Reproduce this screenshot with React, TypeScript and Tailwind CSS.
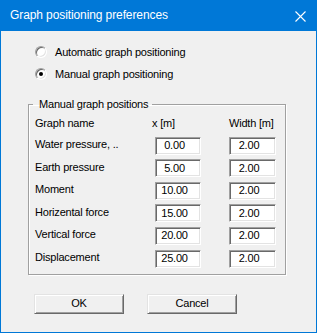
import React from 'react'

const rows = [
  { name: 'Water pressure, ..', x: '0.00', w: '2.00' },
  { name: 'Earth pressure', x: '5.00', w: '2.00' },
  { name: 'Moment', x: '10.00', w: '2.00' },
  { name: 'Horizental force', x: '15.00', w: '2.00' },
  { name: 'Vertical force', x: '20.00', w: '2.00' },
  { name: 'Displacement', x: '25.00', w: '2.00' },
]

function Radio({ checked, label }: { checked?: boolean; label: string }) {
  return (
    <div className="flex h-[22px] items-center pl-[7px]">
      <div className="flex h-[12px] w-[12px] items-center justify-center rounded-full border border-t-[#a0a0a0] border-l-[#a0a0a0] border-b-white border-r-white bg-white shadow-[inset_1px_1px_0_#696969,inset_-1px_-1px_0_#e3e3e3]">
        {checked && <div className="h-[4px] w-[4px] rounded-full bg-black" />}
      </div>
      <span className="ml-[8px]">{label}</span>
    </div>
  )
}

function Field({ value }: { value: string }) {
  return (
    <div className="flex h-[18px] items-center justify-center border border-t-[#a0a0a0] border-l-[#a0a0a0] border-b-white border-r-white bg-white pr-[7px] shadow-[inset_1px_1px_0_#696969,inset_-1px_-1px_0_#e3e3e3]">
      {value}
    </div>
  )
}

function Button({ label }: { label: string }) {
  return (
    <div className="flex h-[20px] w-[90px] items-center justify-center border border-t-[#e3e3e3] border-l-[#e3e3e3] border-b-[#696969] border-r-[#696969] bg-[#f0f0f0] shadow-[inset_1px_1px_0_#fff,inset_-1px_-1px_0_#a0a0a0]">
      {label}
    </div>
  )
}

export default function App() {
  return (
    <div
      className="flex h-[333px] w-[317px] flex-col border-x border-b border-[#0078d7] bg-[#f0f0f0] text-[11px] leading-[13px] tracking-[-0.2px] text-black"
      style={{ fontFamily: '"Liberation Sans", Arial, sans-serif' }}
    >
      {/* title bar */}
      <div className="flex h-[31px] shrink-0 items-center justify-between bg-[#0078d7] pl-[9px] pr-[10px] text-[12px] tracking-[-0.1px] text-white">
        <span>Graph positioning preferences</span>
        <svg width="11" height="11" viewBox="0 0 11 11" className="mt-[1px]">
          <path d="M0.5 0.5 L10.5 10.5 M10.5 0.5 L0.5 10.5" stroke="#fff" strokeWidth="1.1" />
        </svg>
      </div>

      <div className="flex flex-col px-[27px] pt-[10px]">
        <Radio label="Automatic graph positioning" />
        <Radio checked label="Manual graph positioning" />

        <fieldset className="mt-[13px] w-[258px] border border-[#a0a0a0] pb-[6px] pl-[6px] pt-[3px] shadow-[inset_1px_1px_0_#fff,1px_1px_0_#fff]">
          <legend className="ml-[-2px] pl-[6px] pr-[4px]">Manual graph positions</legend>
          <div className="grid grid-cols-[120px_46px_28px_47px] gap-y-[4.6px]">
            <div className="flex h-[18px] items-center">Graph name</div>
            <div className="ml-[-3px] flex h-[18px] items-center">x [m]</div>
            <div />
            <div className="flex h-[18px] items-center">Width [m]</div>
            {rows.map((r) => (
              <React.Fragment key={r.name}>
                <div className="mb-[2px] flex h-[16px] items-center">{r.name}</div>
                <Field value={r.x} />
                <div />
                <Field value={r.w} />
              </React.Fragment>
            ))}
          </div>
        </fieldset>

        <div className="ml-[6px] mt-[19px] flex gap-[23px]">
          <Button label="OK" />
          <Button label="Cancel" />
        </div>
      </div>
    </div>
  )
}
